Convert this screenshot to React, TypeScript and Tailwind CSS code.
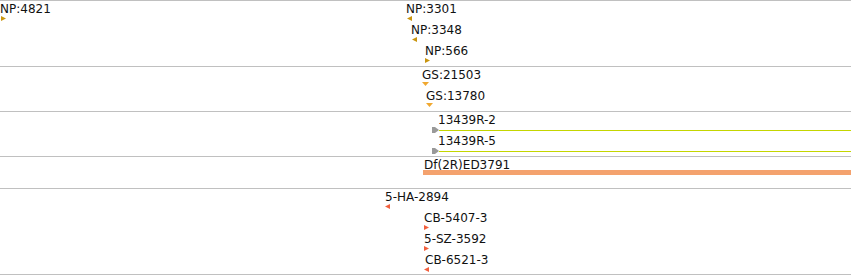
import React from "react";

type Glyph = "right" | "left" | "down" | "arrow";

const font = "font-['DejaVu_Sans',sans-serif]";

function Tri({ glyph, className }: { glyph: Glyph; className: string }) {
  if (glyph === "down")
    return (
      <svg className={`block shrink-0 ${className}`} width="7" height="4" viewBox="0 0 7 4">
        <polygon points="0,0 7,0 3.5,4" />
      </svg>
    );
  if (glyph === "arrow")
    return (
      <svg className={`block shrink-0 ${className}`} width="7" height="6" viewBox="0 0 7 6">
        <polygon points="0,0 3,0 7,3 3,6 0,6" />
      </svg>
    );
  return (
    <svg className={`block shrink-0 ${className}`} width="5" height="5" viewBox="0 0 5 5">
      <polygon points={glyph === "left" ? "5,0 0,2.5 5,5" : "0,0 5,2.5 0,5"} />
    </svg>
  );
}

type Feat = { label: string; row: string; lab?: string; glyph: Glyph; g: string };

function Feature({ f }: { f: Feat }) {
  return (
    <div className={`flex h-[21px] shrink-0 flex-col items-start ${f.row}`}>
      <span className={`block h-[14px] whitespace-nowrap text-[12px] leading-[14px] text-[#111] ${font} ${f.lab ?? ""}`}>
        {f.label}
      </span>
      <Tri glyph={f.glyph} className={f.g} />
    </div>
  );
}

function Track({ cls, feats, children }: { cls: string; feats: Feat[]; children?: React.ReactNode }) {
  return (
    <div className={`flex w-full shrink-0 flex-col border-t border-[#c0c0c0] pt-px ${cls}`}>
      {children}
      {feats.map((f) => (
        <Feature key={f.label} f={f} />
      ))}
    </div>
  );
}

const np: Feat[] = [
  { label: "NP:3348", row: "ml-[411px]", glyph: "left", g: "ml-px fill-[#c9950f]" },
  { label: "NP:566", row: "ml-[425px]", glyph: "right", g: "fill-[#c9950f]" },
];

const gs: Feat[] = [
  { label: "GS:21503", row: "ml-[422px]", glyph: "down", g: "fill-[#f0a830]" },
  { label: "GS:13780", row: "ml-[426px]", glyph: "down", g: "fill-[#f0a830]" },
];

const red: Feat[] = [
  { label: "5-HA-2894", row: "ml-[385px]", glyph: "left", g: "fill-[#f2603e]" },
  { label: "CB-5407-3", row: "ml-[424px]", glyph: "right", g: "fill-[#f2603e]" },
  { label: "5-SZ-3592", row: "ml-[424px]", glyph: "right", g: "fill-[#f2603e]" },
  { label: "CB-6521-3", row: "ml-[424px]", lab: "ml-px", glyph: "left", g: "fill-[#f2603e]" },
];

function Clone({ label }: { label: string }) {
  return (
    <div className="ml-[432px] flex h-[21px] shrink-0 flex-col">
      <span className={`ml-[6px] block h-[14px] whitespace-nowrap text-[12px] leading-[14px] text-[#111] ${font}`}>
        {label}
      </span>
      <div className="flex items-start">
        <Tri glyph="arrow" className="fill-[#999999]" />
        <div className="mt-[3px] h-px flex-1 bg-[#c4d600]" />
      </div>
    </div>
  );
}

export default function App() {
  return (
    <div className="flex h-[276px] w-[851px] flex-col overflow-hidden bg-white">
      <Track cls="h-[66px]" feats={np}>
        <div className="grid grid-cols-[406px_auto]">
          <Feature f={{ label: "NP:4821", row: "ml-0", glyph: "right", g: "ml-px fill-[#c9950f]" }} />
          <Feature f={{ label: "NP:3301", row: "ml-0", glyph: "left", g: "ml-px fill-[#c9950f]" }} />
        </div>
      </Track>
      <Track cls="h-[45px]" feats={gs} />
      <div className="flex h-[45px] w-full shrink-0 flex-col border-t border-[#c0c0c0] pt-px">
        <Clone label="13439R-2" />
        <Clone label="13439R-5" />
      </div>
      <div className="flex h-[32px] w-full shrink-0 flex-col border-t border-[#c0c0c0] pt-px">
        <span className={`ml-[424px] block h-[12px] whitespace-nowrap text-[12px] leading-[14px] text-[#111] ${font}`}>
          Df(2R)ED3791
        </span>
        <div className="ml-[423px] h-[5px] bg-[#f4a26e]" />
      </div>
      <Track cls="h-[87px] border-b" feats={red} />
    </div>
  );
}
